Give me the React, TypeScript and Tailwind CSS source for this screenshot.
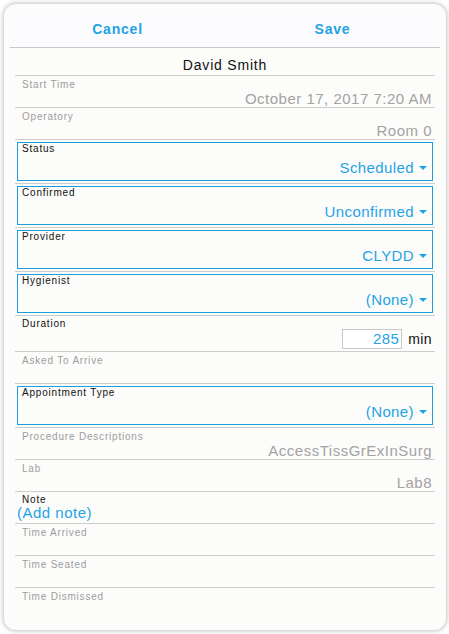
import React from "react";

const BLUE = "text-[#1fa3e6]";

function Caret() {
  return (
    <span className="inline-block ml-[5px] mb-[3px] w-0 h-0 border-l-[4px] border-r-[4px] border-t-[4px] border-l-transparent border-r-transparent border-t-[#1fa3e6] align-middle" />
  );
}

function PlainRow({ label, value }: { label: string; value?: string }) {
  return (
    <div className="border-t border-[#cdcdcd] h-[32px] flex flex-col justify-between pb-[3px]">
      <div className="pl-[7px] pt-[3px] text-[10px] leading-[12px] tracking-[0.8px] text-[#9c9c9c]">{label}</div>
      {value !== undefined && (
        <div className="pr-[3px] text-right text-[15px] leading-[15px] tracking-[0.5px] text-[#a3a3a3]">{value}</div>
      )}
    </div>
  );
}

function BoxRow({ label, value }: { label: string; value: string }) {
  return (
    <div className="border-t border-[#cdcdcd] py-[2px] px-[2px]">
      <div className="h-[39px] border border-[#1b9fdc] flex flex-col justify-between pb-[5px]">
        <div className="pl-[4px] pt-[1px] text-[10px] leading-[10px] tracking-[0.8px] text-[#111]">{label}</div>
        <div className={`pr-[5px] text-right text-[15px] leading-[15px] tracking-[0.4px] ${BLUE}`}>
          {value}
          <Caret />
        </div>
      </div>
    </div>
  );
}

export default function App() {
  return (
    <div
      className="min-h-screen bg-white pt-[4px] pl-[4px]"
      style={{ fontFamily: '"Liberation Sans", Arial, sans-serif' }}
    >
      <div className="w-[442px] h-[626px] rounded-[12px] bg-[#fcfcfb] shadow-[0_0_4px_1px_rgba(0,0,0,0.25)] p-[6px]">
        <div className="h-[38px] bg-[#fcfbfd] border-b border-[#c8c8c8] flex">
          <div className={`flex-1 flex items-center justify-center text-[14px] leading-[16px] font-bold tracking-[0.8px] ${BLUE}`}>
            Cancel
          </div>
          <div className={`flex-1 flex items-center justify-center text-[14px] leading-[16px] font-bold tracking-[0.8px] ${BLUE}`}>
            Save
          </div>
        </div>
        <div className="mx-[5px]">
          <div className="h-[27px] pt-[9px] text-center text-[14px] leading-[16px] tracking-[0.8px] text-[#111]">
            David Smith
          </div>
          <PlainRow label="Start Time" value="October 17, 2017 7:20 AM" />
          <PlainRow label="Operatory" value="Room 0" />
          <BoxRow label="Status" value="Scheduled" />
          <BoxRow label="Confirmed" value="Unconfirmed" />
          <BoxRow label="Provider" value="CLYDD" />
          <BoxRow label="Hygienist" value="(None)" />
          <div className="border-t border-[#cdcdcd] h-[36px] flex flex-col">
            <div className="pl-[7px] pt-[3px] text-[10px] leading-[10px] tracking-[0.8px] text-[#111]">Duration</div>
            <div className="flex justify-end items-center gap-[6px] pr-[3px]">
              <div className={`w-[60px] h-[20px] border border-[#c8c8c8] bg-white text-right pr-[2px] text-[15px] leading-[18px] tracking-[0.4px] ${BLUE}`}>
                285
              </div>
              <div className="text-[14px] leading-[18px] tracking-[0.4px] text-[#111]">min</div>
            </div>
          </div>
          <PlainRow label="Asked To Arrive" />
          <BoxRow label="Appointment Type" value="(None)" />
          <PlainRow label="Procedure Descriptions" value="AccessTissGrExInSurg" />
          <PlainRow label="Lab" value="Lab8" />
          <div className="border-t border-[#cdcdcd] h-[32px]">
            <div className="pl-[7px] pt-[2px] text-[10px] leading-[11px] tracking-[0.8px] text-[#111]">Note</div>
            <div className={`pl-[2px] text-[15px] leading-[15px] tracking-[0.5px] ${BLUE}`}>(Add note)</div>
          </div>
          <PlainRow label="Time Arrived" />
          <PlainRow label="Time Seated" />
          <PlainRow label="Time Dismissed" />
        </div>
      </div>
    </div>
  );
}
